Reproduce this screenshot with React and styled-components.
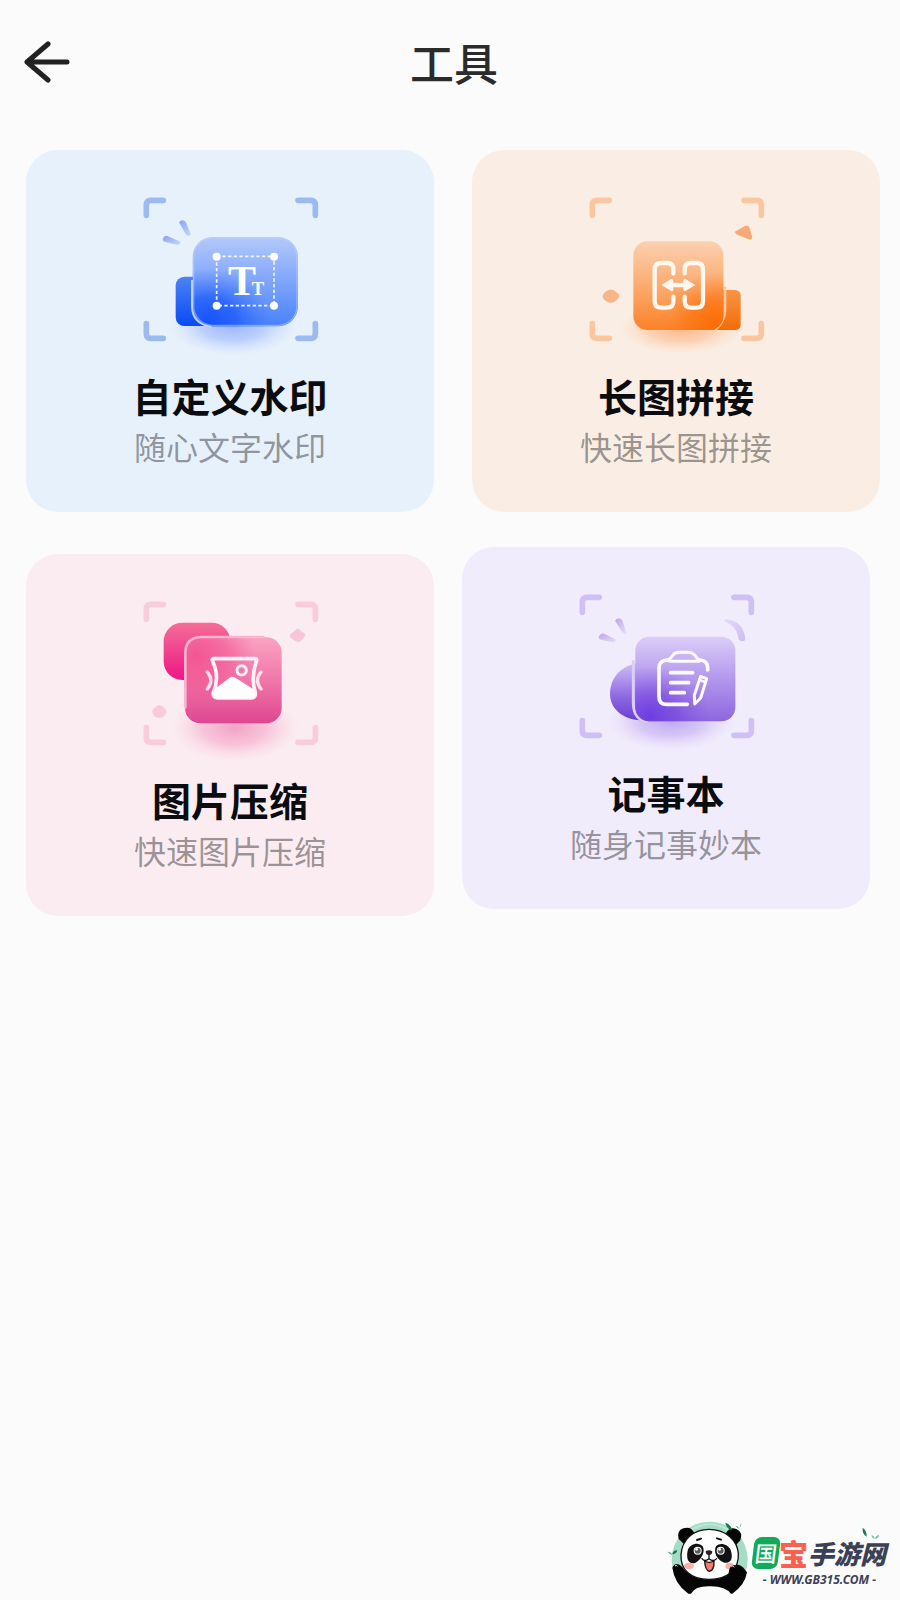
import React from 'react';
import styled, { createGlobalStyle } from 'styled-components';

const App = () => {
    return (
        <React.Fragment>
            <GlobalStyle/>
            <Page>
                <Header>
                    <BackButton type="button" aria-label="返回">
                        <BackArrow/>
                    </BackButton>
                    <PageTitle>工具</PageTitle>
                </Header>

                <Tools>
                    <ToolRow $gap="38px" $right="20px">
                        <ToolCard type="button" $bg="#e7f1fc">
                            <WatermarkIcon/>
                            <ToolName>自定义水印</ToolName>
                            <ToolDesc>随心文字水印</ToolDesc>
                        </ToolCard>
                        <ToolCard type="button" $bg="#faeee4">
                            <StitchIcon/>
                            <ToolName>长图拼接</ToolName>
                            <ToolDesc>快速长图拼接</ToolDesc>
                        </ToolCard>
                    </ToolRow>
                    <ToolRow $gap="28px" $right="30px">
                        <ToolCard type="button" $bg="#fbecf1" $top="7px">
                            <CompressIcon/>
                            <ToolName>图片压缩</ToolName>
                            <ToolDesc>快速图片压缩</ToolDesc>
                        </ToolCard>
                        <ToolCard type="button" $bg="#f1ecfb">
                            <NoteIcon/>
                            <ToolName>记事本</ToolName>
                            <ToolDesc>随身记事妙本</ToolDesc>
                        </ToolCard>
                    </ToolRow>
                </Tools>

                <Footer>
                    <PandaLogo/>
                    <Brand>
                        <BrandName>
                            <BrandBadge>国</BrandBadge>
                            <BrandRed>宝</BrandRed>
                            <BrandDark>手游网</BrandDark>
                            <BrandLeaves/>
                        </BrandName>
                        <BrandUrl>- WWW.GB315.COM -</BrandUrl>
                    </Brand>
                </Footer>
            </Page>
        </React.Fragment>
    );
};

const BackArrow = () => (
    <svg width="48" height="44" viewBox="0 0 48 44" fill="none" stroke="#222" strokeWidth="5" strokeLinecap="round" strokeLinejoin="round">
        <path d="M24 4 3 22 24 40M4 22H43"/>
    </svg>
);

//네 모서리 프레임
const Frame = ({ color }) => (
    <path
        d="M49 106V75Q49 61 63 61H100M504 61H542Q556 61 556 75V106M556 431V461Q556 475 542 475H504M100 475H63Q49 475 49 461V431"
        fill="none" stroke={color} strokeWidth="17" strokeLinecap="round"
    />
);

const WatermarkIcon = () => (
    <Icon viewBox="0 0 600 540">
        <defs>
            <linearGradient id="wmBox" x1="0" y1="0" x2="0" y2="1">
                <stop offset="0" stopColor="#b4c9fa"/>
                <stop offset="0.5" stopColor="#7fa5fa"/>
                <stop offset="1" stopColor="#4781fa"/>
            </linearGradient>
            <linearGradient id="wmBack" x1="0" y1="0" x2="0" y2="1">
                <stop offset="0" stopColor="#4c82f5"/>
                <stop offset="1" stopColor="#0a4af5"/>
            </linearGradient>
            <radialGradient id="wmGlow" cx="0.15" cy="0.95" r="0.6">
                <stop offset="0" stopColor="#1653fb"/>
                <stop offset="0.45" stopColor="#1d5afb" stopOpacity="0.75"/>
                <stop offset="1" stopColor="#3d74fb" stopOpacity="0"/>
            </radialGradient>
            <radialGradient id="wmShadow">
                <stop offset="0" stopColor="#8fabfb" stopOpacity="0.85"/>
                <stop offset="0.5" stopColor="#9fb9fb" stopOpacity="0.6"/>
                <stop offset="1" stopColor="#c2d5fb" stopOpacity="0"/>
            </radialGradient>
            <linearGradient id="wmRay" x1="0" y1="0" x2="1" y2="1">
                <stop offset="0" stopColor="#86a4ee"/>
                <stop offset="1" stopColor="#c6d7f8"/>
            </linearGradient>
        </defs>
        <Frame color="#9bbaf0"/>
        <path d="M147 127Q157 115 168 127L182 162Q176 174 167 162Z" fill="url(#wmRay)"/>
        <path d="M98 178Q103 162 117 170L148 184Q156 190 143 195L109 187Q98 185 98 178Z" fill="url(#wmRay)"/>
        <ellipse cx="310" cy="438" rx="190" ry="88" fill="url(#wmShadow)"/>
        <rect x="137" y="290" width="110" height="148" rx="26" fill="url(#wmBack)"/>
        <rect x="188" y="171" width="316" height="268" rx="60" fill="url(#wmBox)"/>
        <rect x="188" y="171" width="316" height="268" rx="60" fill="url(#wmGlow)"/>
        <path d="M186 300V380Q188 432 244 440" fill="none" stroke="#bcd3ff" strokeWidth="6"/>
        <rect x="191" y="174" width="310" height="262" rx="57" fill="none" stroke="#c2d4fc" strokeWidth="4" opacity="0.5"/>
        <rect x="260" y="229" width="172" height="148" fill="none" stroke="#edf3ff" strokeWidth="5" strokeDasharray="10 7"/>
        <g fill="#fff">
            <circle cx="260" cy="230" r="12"/>
            <circle cx="432" cy="230" r="12"/>
            <circle cx="260" cy="377" r="12"/>
            <circle cx="432" cy="377" r="12"/>
        </g>
        <IconText x="336" y="346" fontSize="126">T</IconText>
        <IconText x="384" y="346" fontSize="56">T</IconText>
    </Icon>
);

const StitchIcon = () => (
    <Icon viewBox="0 0 600 540">
        <defs>
            <linearGradient id="stBox" x1="0" y1="0" x2="0" y2="1">
                <stop offset="0" stopColor="#fbd0b0"/>
                <stop offset="0.5" stopColor="#fcab70"/>
                <stop offset="1" stopColor="#fb8228"/>
            </linearGradient>
            <linearGradient id="stBack" x1="0" y1="0" x2="0" y2="1">
                <stop offset="0" stopColor="#f99445"/>
                <stop offset="1" stopColor="#f36c08"/>
            </linearGradient>
            <radialGradient id="stGlow" cx="0.92" cy="0.95" r="0.6">
                <stop offset="0" stopColor="#fb6c05"/>
                <stop offset="0.5" stopColor="#fb7410" stopOpacity="0.7"/>
                <stop offset="1" stopColor="#fb8530" stopOpacity="0"/>
            </radialGradient>
            <radialGradient id="stShadow">
                <stop offset="0" stopColor="#fbae79" stopOpacity="0.85"/>
                <stop offset="0.5" stopColor="#fbbd92" stopOpacity="0.6"/>
                <stop offset="1" stopColor="#fbd9c0" stopOpacity="0"/>
            </radialGradient>
        </defs>
        <Frame color="#f9c6a0"/>
        <path d="M478 154 508 137Q518 134 521 145L529 171Q528 181 518 178L484 164Q475 160 478 154Z" fill="#f6aa75"/>
        <path d="M84 340Q104 318 124 339Q137 348 123 359Q104 378 86 360Q74 350 84 340Z" fill="#f8b587"/>
        <ellipse cx="315" cy="446" rx="190" ry="78" fill="url(#stShadow)"/>
        <rect x="400" y="330" width="94" height="120" rx="16" fill="url(#stBack)"/>
        <path d="M447 320V390Q446 425 418 450" fill="none" stroke="#fdc99e" strokeWidth="8"/>
        <rect x="172" y="184" width="270" height="266" rx="42" fill="url(#stBox)"/>
        <rect x="172" y="184" width="270" height="266" rx="42" fill="url(#stGlow)"/>
        <g fill="none" stroke="#fff8f1" strokeWidth="13" strokeLinecap="round" strokeLinejoin="round">
            <path d="M292 280V268Q292 249 273 249H256Q236 249 236 269V363Q236 383 256 383H273Q292 383 292 363V350"/>
            <path d="M326 280V268Q326 249 345 249H362Q381 249 381 269V363Q381 383 362 383H345Q326 383 326 363V350"/>
            <path d="M278 315H340"/>
        </g>
        <path d="M256 315 286 297Q292 296 292 302V328Q292 335 286 333ZM358 315 328 297Q322 296 322 302V328Q322 335 328 333Z" fill="#fff8f1"/>
    </Icon>
);

const CompressIcon = () => (
    <Icon viewBox="0 0 600 540">
        <defs>
            <linearGradient id="cpBox" x1="0" y1="0" x2="0" y2="1">
                <stop offset="0" stopColor="#faa3c1"/>
                <stop offset="0.5" stopColor="#f077a9"/>
                <stop offset="1" stopColor="#df4690"/>
            </linearGradient>
            <linearGradient id="cpBack" x1="0" y1="0" x2="0" y2="1">
                <stop offset="0" stopColor="#f56e98"/>
                <stop offset="1" stopColor="#ee1584"/>
            </linearGradient>
            <radialGradient id="cpGlow" cx="0.12" cy="0.2" r="0.6">
                <stop offset="0" stopColor="#f34f91" stopOpacity="0.9"/>
                <stop offset="0.5" stopColor="#f3508f" stopOpacity="0.6"/>
                <stop offset="1" stopColor="#f3508f" stopOpacity="0"/>
            </radialGradient>
            <radialGradient id="cpShadow">
                <stop offset="0" stopColor="#f295bc" stopOpacity="0.85"/>
                <stop offset="0.5" stopColor="#f5a9c8" stopOpacity="0.6"/>
                <stop offset="1" stopColor="#f9cddf" stopOpacity="0"/>
            </radialGradient>
        </defs>
        <Frame color="#f8ccda"/>
        <path d="M481 151 503 133 526 151Q527 159 508 174Q500 176 480 160Z" fill="#f8c4d7"/>
        <path d="M66 381Q88 347 110 381Q105 402 88 402Q71 402 66 381Z" fill="#f8cadb"/>
        <ellipse cx="315" cy="432" rx="192" ry="102" fill="url(#cpShadow)"/>
        <rect x="101" y="116" width="200" height="172" rx="56" fill="url(#cpBack)"/>
        <rect x="165" y="160" width="290" height="258" rx="46" fill="url(#cpBox)"/>
        <rect x="165" y="160" width="290" height="258" rx="46" fill="url(#cpGlow)"/>
        <path d="M166 370V208Q166 160 214 159H400" fill="none" stroke="#fbb3cf" strokeWidth="8" strokeLinecap="round"/>
        <path d="M251 224H375Q382 224 379 232Q362 280 376 326Q378 341 364 342H262Q248 341 250 326Q270 280 248 232Q244 224 251 224Z" fill="none" stroke="#fff1f6" strokeWidth="11" strokeLinejoin="round"/>
        <path d="M254 315 299 281Q307 276 316 281L374 318V334Q374 343 365 343H262Q252 343 252 334Z" fill="#fff"/>
        <circle cx="335" cy="259" r="14" fill="none" stroke="#fff1f6" strokeWidth="9"/>
        <path d="M232 264Q253 289 232 315M393 264Q372 289 393 315" fill="none" stroke="#fde0eb" strokeWidth="10" strokeLinecap="round"/>
    </Icon>
);

const NoteIcon = () => (
    <Icon viewBox="0 0 600 540">
        <defs>
            <linearGradient id="ntBox" x1="0" y1="0" x2="0" y2="1">
                <stop offset="0" stopColor="#dccdf8"/>
                <stop offset="0.5" stopColor="#b397ed"/>
                <stop offset="1" stopColor="#8d66df"/>
            </linearGradient>
            <linearGradient id="ntBack" x1="0" y1="0" x2="0" y2="1">
                <stop offset="0" stopColor="#d0bdf6"/>
                <stop offset="0.6" stopColor="#8d67e2"/>
                <stop offset="1" stopColor="#6a3fd2"/>
            </linearGradient>
            <radialGradient id="ntGlow" cx="0.15" cy="0.95" r="0.6">
                <stop offset="0" stopColor="#6f3de0"/>
                <stop offset="0.45" stopColor="#7545e0" stopOpacity="0.65"/>
                <stop offset="1" stopColor="#8459e3" stopOpacity="0"/>
            </radialGradient>
            <radialGradient id="ntShadow">
                <stop offset="0" stopColor="#b79cf0" stopOpacity="0.85"/>
                <stop offset="0.5" stopColor="#c3adf2" stopOpacity="0.6"/>
                <stop offset="1" stopColor="#ddd1f9" stopOpacity="0"/>
            </radialGradient>
            <linearGradient id="ntRay" x1="0" y1="0" x2="1" y2="1">
                <stop offset="0" stopColor="#bca6e6"/>
                <stop offset="1" stopColor="#e6dcfa"/>
            </linearGradient>
            <linearGradient id="ntArc" x1="0" y1="0" x2="1" y2="1">
                <stop offset="0" stopColor="#e4dbfa"/>
                <stop offset="1" stopColor="#cdbbf1"/>
            </linearGradient>
        </defs>
        <Frame color="#d0bff4"/>
        <path d="M147 131Q158 117 170 131L181 168Q177 174 168 164Z" fill="url(#ntRay)"/>
        <path d="M98 180Q105 163 121 173L148 187Q152 194 141 196L110 189Q98 188 98 180Z" fill="url(#ntRay)"/>
        <path d="M478 126Q534 132 538 188Q531 198 518 188Q514 148 474 132Z" fill="url(#ntArc)"/>
        <ellipse cx="315" cy="434" rx="192" ry="88" fill="url(#ntShadow)"/>
        <path d="M240 258C170 255 132 300 132 350C132 402 180 432 240 430Z" fill="url(#ntBack)"/>
        <path d="M202 250V380Q204 430 246 433" fill="none" stroke="#dccdfb" strokeWidth="9"/>
        <rect x="208" y="179" width="300" height="254" rx="42" fill="url(#ntBox)"/>
        <rect x="208" y="179" width="300" height="254" rx="42" fill="url(#ntGlow)"/>
        <g fill="none" stroke="#fcfaff" strokeWidth="11" strokeLinecap="round" strokeLinejoin="round">
            <path d="M364 382H302Q279 382 279 359V273Q279 250 305 249"/>
            <path d="M402 249Q425 251 425 272V279"/>
            <path d="M305 249Q312 247 322 233Q328 226 340 226H366Q378 226 385 233Q394 247 402 249Q402 253 394 253H314Q306 253 305 249Z" strokeWidth="9"/>
            <path d="M314 287H380M314 317H368M314 347H355"/>
            <path d="M404 298 422 305 404 363 386 381 385 355Z" strokeWidth="9"/>
            <path d="M400 309 417 315" strokeWidth="8"/>
        </g>
    </Icon>
);

const PandaLogo = () => (
    <svg width="90" height="85" viewBox="0 0 270 255" role="img" aria-label="panda">
        <circle cx="140" cy="134" r="114" fill="#a4dcc5"/>
        <path d="M64 60Q140 -5 215 59" fill="none" stroke="#c0e8d8" strokeWidth="5"/>
        <path d="M28 158Q38 137 58 156Q74 184 140 190Q178 186 196 160Q220 138 240 157L252 172Q246 210 208 236H76Q34 206 28 158Z" fill="#050505"/>
        <path d="M84 236Q95 214 137 214Q187 212 204 237L184 255H96Z" fill="#fbfbfb"/>
        <path d="M47 72Q40 47 61 40Q84 33 94 54L67 91ZM188 56Q200 34 220 42Q242 52 231 77L216 93Z" fill="#050505"/>
        <path d="M138 43C188 43 223 75 226 116C229 165 191 194 137 193C82 193 52 163 54 119C57 74 91 43 138 43Z" fill="#fff" stroke="#111" strokeWidth="4"/>
        <path d="M75 103C83 85 108 80 119 94C127 108 118 132 98 143C78 151 67 133 75 103ZM159 94C172 81 195 88 203 105C211 129 205 146 184 143C163 137 150 112 159 94Z" fill="#111"/>
        <circle cx="104" cy="107" r="12" fill="#fff"/>
        <circle cx="173" cy="107" r="12" fill="#fff"/>
        <circle cx="104" cy="107" r="9" fill="#565b5e"/>
        <circle cx="173" cy="107" r="9" fill="#565b5e"/>
        <circle cx="101" cy="103" r="4" fill="#fff"/>
        <circle cx="170" cy="103" r="4" fill="#fff"/>
        <path d="M102 75 114 71M162 70 174 74" stroke="#111" strokeWidth="6" strokeLinecap="round"/>
        <ellipse cx="78" cy="153" rx="15" ry="10" fill="#fab0a7"/>
        <ellipse cx="200" cy="153" rx="13" ry="10" fill="#fab0a7"/>
        <path d="M128 109Q138 103 148 109Q148 119 138 121Q128 119 128 109Z" fill="#222"/>
        <path d="M125 138Q138 146 153 138Q154 167 139 169Q126 165 125 138Z" fill="#f87869" stroke="#111" strokeWidth="4"/>
        <path d="M117 131Q124 142 138 131Q151 142 161 131M138 121V131" fill="none" stroke="#111" strokeWidth="4" strokeLinecap="round"/>
        <path d="M198 190Q193 155 211 150Q230 149 236 168L246 192L216 215Z" fill="#050505"/>
        <path d="M36 153Q40 148 43 154M205 155Q210 149 214 156" fill="none" stroke="#fff" strokeWidth="3"/>
        <path d="M187 23Q204 27 207 47Q190 41 187 23ZM28 118Q30 105 43 106Q41 117 28 118Z" fill="#147a50"/>
        <path d="M229 40Q233 29 234 23Q237 31 229 40ZM218 32Q222 40 229 41Q224 32 218 32ZM14 110Q21 120 28 120Q25 111 14 110Z" fill="#4da57e"/>
    </svg>
);

const BrandLeaves = () => (
    <Leaves width="20" height="14" viewBox="0 0 60 42">
        <path d="M8 2Q20 9 20 29Q6 21 8 2Z" fill="#157b50"/>
        <path d="M34 23Q36 35 44 35Q42 26 34 23ZM45 36Q47 26 57 23Q57 33 45 36Z" fill="#78b999"/>
    </Leaves>
);

const GlobalStyle = createGlobalStyle`
    body{
        margin: 0;
        background-color: #fbfbfb;
        font-family: "Noto Sans CJK SC", sans-serif;
    }
    *{
        box-sizing: border-box;
    }
`;

const Page = styled.div`
    display: flex;
    flex-direction: column;
    min-height: 100vh;
`;

const Header = styled.header`
    display: grid;
    grid-template-columns: 48px 1fr 40px;
    align-items: center;
    padding: 30px 24px 0;
`;

const BackButton = styled.button`
    display: flex;
    padding: 0;
    border: none;
    background: none;
    cursor: pointer;
`;

const PageTitle = styled.h1`
    margin: 0;
    color: #2b2b2b;
    font-size: 44px;
    font-weight: 500;
    line-height: 64px;
    text-align: center;
`;

const Tools = styled.main`
    display: flex;
    flex-direction: column;
    gap: 35px;
    padding-top: 56px;
`;

const ToolRow = styled.div`
    display: flex;
    align-items: flex-start;
    gap: ${(props) => props.$gap};
    padding-left: 26px;
    padding-right: ${(props) => props.$right};
`;

const ToolCard = styled.button`
    display: flex;
    flex: 1;
    flex-direction: column;
    align-items: center;
    margin: ${(props) => props.$top || "0"} 0 0;
    padding: 30px 0 46px;
    border: none;
    border-radius: 32px;
    background-color: ${(props) => props.$bg};
    font-family: inherit;
    cursor: pointer;
`;

const Icon = styled.svg`
    width: 200px;
    height: 180px;
`;

const IconText = styled.text`
    fill: #fff;
    font-family: "Liberation Serif", serif;
    font-weight: bold;
    text-anchor: middle;
`;

const ToolName = styled.span`
    margin-top: 11px;
    color: #0b0c10;
    font-size: 39px;
    font-weight: 700;
    line-height: 48px;
`;

const ToolDesc = styled.span`
    margin-top: 7px;
    color: #0006;
    font-size: 32px;
    font-weight: 400;
    line-height: 40px;
`;

const Footer = styled.footer`
    display: flex;
    justify-content: flex-end;
    margin-top: auto;
    padding-right: 14px;
`;

const Brand = styled.div`
    display: flex;
    flex-direction: column;
    align-items: center;
    padding-top: 20px;
`;

const BrandName = styled.div`
    position: relative;
    display: flex;
    align-items: center;
    height: 36px;
    font-weight: 900;
`;

const BrandBadge = styled.span`
    width: 26px;
    height: 32px;
    border-radius: 7px;
    background-color: #11a95a;
    color: #fff;
    font-size: 22px;
    font-weight: 500;
    line-height: 31px;
    text-align: center;
    transform: skewX(-7deg);
`;

const BrandRed = styled.span`
    color: #fb5f50;
    font-size: 29px;
    line-height: 36px;
`;

const BrandDark = styled.span`
    color: #3b4154;
    font-size: 26px;
    font-style: italic;
    line-height: 36px;
`;

const Leaves = styled.svg`
    position: absolute;
    top: -8px;
    right: 6px;
`;

const BrandUrl = styled.span`
    color: #3b4154;
    font-family: "Noto Sans", sans-serif;
    font-size: 12px;
    font-style: italic;
    font-weight: 700;
    line-height: 18px;
`;

export default App;
